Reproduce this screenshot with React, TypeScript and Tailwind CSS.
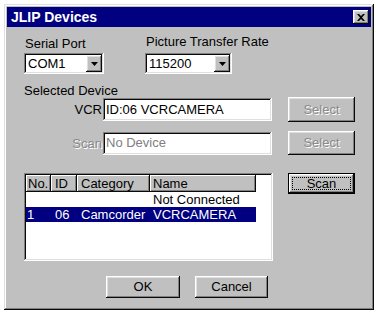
import React from "react";

const raised =
  "bg-[#c0c0c0] shadow-[inset_-1px_-1px_#0a0a0a,inset_1px_1px_#ffffff,inset_-2px_-2px_#808080,inset_2px_2px_#dfdfdf]";
const sunken =
  "bg-white shadow-[inset_-1px_-1px_#ffffff,inset_1px_1px_#808080,inset_-2px_-2px_#dfdfdf,inset_2px_2px_#0a0a0a]";
const headerCell =
  "h-full flex items-center bg-[#c0c0c0] shadow-[inset_-1px_-1px_#0a0a0a,inset_1px_1px_#ffffff,inset_-2px_-2px_#808080]";
const disabledText = "text-[#8a8a8a] [text-shadow:1px_1px_0_#ffffff]";

function Arrow() {
  return (
    <svg width="7" height="4" viewBox="0 0 7 4">
      <path d="M0 0h7L3.5 4z" fill="#000" />
    </svg>
  );
}

function Combo({ value, width }: { value: string; width: string }) {
  return (
    <div className={`${sunken} ${width} h-[21px] p-[2px] flex`}>
      <div className="flex-1 pl-[2px] leading-[17px] text-black">{value}</div>
      <div className={`${raised} w-[16px] h-[17px] flex items-center justify-center`}>
        <Arrow />
      </div>
    </div>
  );
}

export default function App() {
  return (
    <div
      className="w-[376px] h-[312px] bg-white pt-[4px] pl-[4px] text-[13px] text-black"
      style={{ fontFamily: '"Liberation Sans", Arial, sans-serif' }}
    >
      <div className="w-[370px] h-[306px] bg-[#c0c0c0] p-[3px] flex flex-col shadow-[inset_-1px_-1px_#0a0a0a,inset_1px_1px_#dfdfdf,inset_-2px_-2px_#808080,inset_2px_2px_#ffffff]">
        {/* Title bar */}
        <div className="h-[20px] bg-[#000080] flex items-center justify-between pl-[4px] pr-[2px] shrink-0">
          <span className="text-white font-bold text-[14px] leading-[16px]">JLIP Devices</span>
          <div className={`${raised} w-[16px] h-[14px] flex items-center justify-center`}>
            <svg width="8" height="7" viewBox="0 0 8 7">
              <path d="M0 0h2l2 2 2-2h2L5 3.5 8 7H6L4 5 2 7H0l3-3.5z" fill="#000" />
            </svg>
          </div>
        </div>

        {/* Body */}
        <div className="flex flex-col">
          {/* Serial port / rate */}
          <div className="flex items-end mt-[7px]">
            <div className="ml-[17px] flex flex-col">
              <div className="leading-[15px] mb-[2px] pl-[1px]">Serial Port</div>
              <Combo value="COM1" width="w-[80px]" />
            </div>
            <div className="ml-[41px] flex flex-col">
              <div className="leading-[15px] mb-[4px] pl-[1px]">Picture Transfer Rate</div>
              <Combo value="115200" width="w-[87px]" />
            </div>
          </div>

          <div className="ml-[17px] mt-[9px] leading-[15px]">Selected Device</div>

          {/* VCR row */}
          <div className="flex items-center h-[25px] mt-[-1px]">
            <div className="w-[96px] text-right pr-[1px] leading-[15px]">VCR</div>
            <div className={`${sunken} w-[169px] h-[23px] pl-[3px] flex items-center`}>ID:06 VCRCAMERA</div>
            <div className={`${raised} ml-[16px] w-[67px] h-[25px] flex items-center justify-center ${disabledText}`}>
              Select
            </div>
          </div>

          {/* Scan row */}
          <div className="flex items-center h-[24px] mt-[9px]">
            <div className={`w-[96px] text-right pr-[1px] leading-[15px] ${disabledText}`}>Scan</div>
            <div className={`${sunken} w-[169px] h-[23px] pl-[3px] flex items-center text-[#808080]`}>No Device</div>
            <div className={`${raised} ml-[16px] w-[67px] h-[24px] flex items-center justify-center ${disabledText}`}>
              Select
            </div>
          </div>

          {/* List row */}
          <div className="flex items-start mt-[18px]">
            <div className={`${sunken} ml-[17px] w-[249px] h-[88px] p-[2px]`}>
              <div className="flex h-[17px] w-[230px] leading-[15px]">
                <div className={`${headerCell} w-[25px] pl-[2px]`}>No.</div>
                <div className={`${headerCell} w-[26px] pl-[4px]`}>ID</div>
                <div className={`${headerCell} w-[73px] pl-[4px]`}>Category</div>
                <div className={`${headerCell} w-[106px] pl-[3px]`}>Name</div>
              </div>
              <div className="flex h-[15px] w-[230px] leading-[15px]">
                <div className="w-[25px]" />
                <div className="w-[26px]" />
                <div className="w-[73px]" />
                <div className="w-[106px] pl-[3px]">Not Connected</div>
              </div>
              <div className="flex h-[15px] w-[230px] leading-[15px] bg-[#000080] text-white">
                <div className="w-[25px] pl-[1px]">1</div>
                <div className="w-[26px] pl-[4px]">06</div>
                <div className="w-[73px] pl-[4px]">Camcorder</div>
                <div className="w-[106px] pl-[3px]">VCRCAMERA</div>
              </div>
            </div>
            <div className="ml-[15px] w-[67px] h-[21px] border border-black">
              <div className={`${raised} w-full h-full p-[3px]`}>
                <div className="w-full h-full border border-dotted border-black flex items-center justify-center leading-[13px]">
                  Scan
                </div>
              </div>
            </div>
          </div>

          {/* OK / Cancel */}
          <div className="flex mt-[15px] ml-[99px] gap-[15px]">
            <div className={`${raised} w-[74px] h-[22px] flex items-center justify-center`}>OK</div>
            <div className={`${raised} w-[73px] h-[22px] flex items-center justify-center`}>Cancel</div>
          </div>
        </div>
      </div>
    </div>
  );
}
